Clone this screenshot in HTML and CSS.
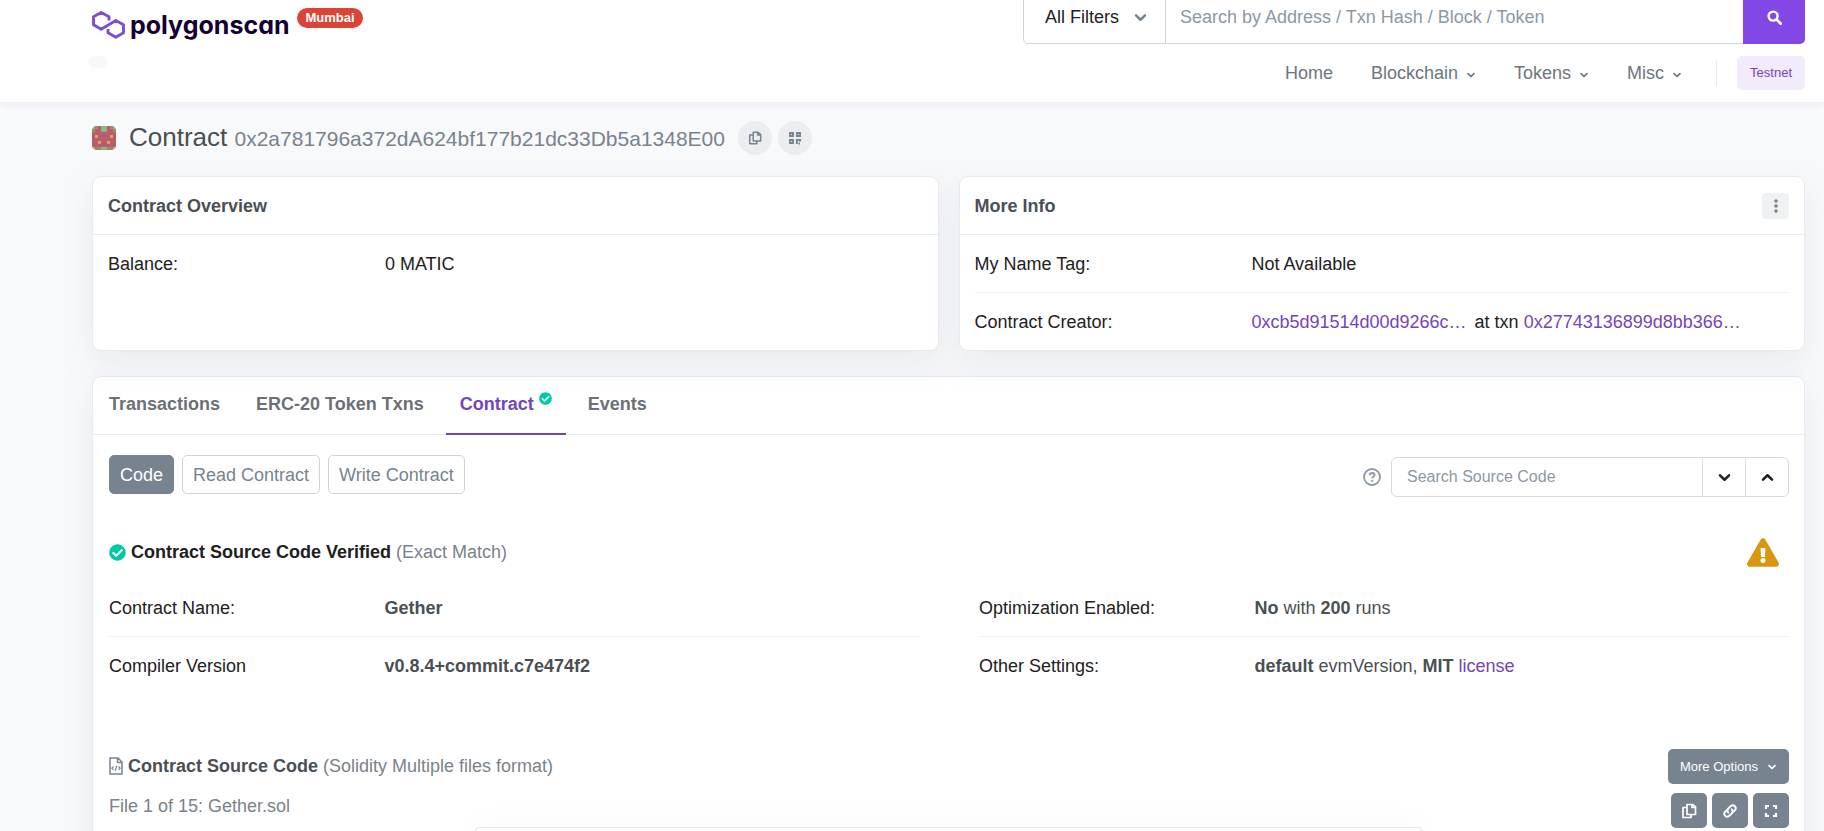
FILE: index.html
```html
<!DOCTYPE html>
<html lang="en">
<head>
<meta charset="utf-8">
<title>Contract | PolygonScan Mumbai</title>
<meta name="viewport" content="width=device-width, initial-scale=1">
<link rel="stylesheet" href="styles.css">
</head>
<body>
<svg class="sprite" aria-hidden="true">
  <symbol id="chevron" viewBox="0 0 10 10"><path d="M2 3.600 5 6.500l3-2.900" fill="none" stroke="currentColor" stroke-width="1.700" stroke-linecap="round" stroke-linejoin="round"/></symbol>
  <symbol id="copy" viewBox="0 0 16 16"><path d="M6 1.500h5.500L14.500 4v7.500H6zM11 1.800v2.700h3.200M6 4.500H2v10h8v-3" fill="none" stroke="currentColor" stroke-width="1.700" stroke-linejoin="round"/></symbol>
  <symbol id="check" viewBox="0 0 512 512"><path fill="currentColor" d="M504 256c0 137-111 248-248 248S8 393 8 256 119 8 256 8s248 111 248 248zM227.300 387.300l184-184c6.200-6.200 6.200-16.400 0-22.600l-22.600-22.600c-6.200-6.200-16.400-6.200-22.600 0L216 308.100l-70.100-70.100c-6.200-6.200-16.400-6.200-22.600 0l-22.600 22.600c-6.200 6.200-6.200 16.400 0 22.600l104 104c6.200 6.300 16.400 6.300 22.600.1z"/></symbol>
</svg>

<header class="site-header">
  <div class="brand">
    <a class="logo" href="#">
      <svg class="logo-mark" viewBox="0 0 33 28" fill="none" stroke="#7b4fd0" stroke-width="2.900" stroke-linejoin="round"><path d="M17 9.500V5.800L9.200 1.500 1.500 5.800v8l7.700 4.400L23.800 9.500l7.700 4.300v8L23.800 26.200 16 21.800V18"/></svg>
      <span class="logo-text">polygonscan</span>
    </a>
    <span class="network">Mumbai</span>
    <span class="price-pill"></span>
  </div>
  <div class="header-main">
    <form class="search">
      <div class="search-filter">
        <select aria-label="Search filter"><option>All Filters</option></select>
        <svg class="search-chevron" aria-hidden="true"><use href="#chevron"/></svg>
      </div>
      <input class="search-input" type="text" aria-label="Search" placeholder="Search by Address / Txn Hash / Block / Token">
      <button class="search-submit" type="button" aria-label="Search"><svg viewBox="0 0 16 16" fill="none" stroke="currentColor" stroke-linecap="round"><circle cx="6.500" cy="6.500" r="4.800" stroke-width="2.600"/><path d="m10.500 10.500 4 4" stroke-width="3"/></svg></button>
    </form>
    <nav class="nav">
      <a href="#">Home</a>
      <a href="#">Blockchain <svg aria-hidden="true"><use href="#chevron"/></svg></a>
      <a href="#">Tokens <svg aria-hidden="true"><use href="#chevron"/></svg></a>
      <a href="#">Misc <svg aria-hidden="true"><use href="#chevron"/></svg></a>
      <span class="nav-divider"></span>
      <button class="testnet" type="button">Testnet</button>
    </nav>
  </div>
</header>

<main class="page">
  <div class="title">
    <svg class="identicon" viewBox="0 0 8 8" shape-rendering="crispEdges" aria-hidden="true"><rect width="8" height="8" fill="#b95d6c"/><path fill="#86b981" d="M3 0h2v2H3zM0 0h1v1H0zM7 0h1v1H7zM3 7h2v1H3zM0 7h1v1H0zM7 7h1v1H7z"/><path fill="#9b8a63" d="M1 0h1v1H1zM6 0h1v1H6zM0 1h1v1H0zM7 1h1v1H7zM1 7h2v1H1zM5 7h2v1H5z"/><path fill="#d9a26a" d="M1 3h1v1H1zM6 3h1v1H6zM2 5h1v1H2zM5 5h1v1H5z"/></svg>
    <h1>Contract <span class="address">0x2a781796a372dA624bf177b21dc33Db5a1348E00</span></h1>
    <div class="title-actions">
      <button class="round" type="button" aria-label="Copy address"><svg aria-hidden="true"><use href="#copy"/></svg></button>
      <button class="round" type="button" aria-label="QR code"><svg viewBox="0 0 14 14" fill="none" stroke="currentColor" stroke-width="1.900"><path d="M2 2h3v3H2zM9 2h3v3H9zM2 9h3v3H2z"/><path d="M8.900 13V9h3.200v1.500M10.500 12.500H12"/></svg></button>
    </div>
  </div>

  <div class="summary">
    <section class="card">
      <div class="card-head"><h2>Contract Overview</h2></div>
      <dl class="rows"><div class="row"><dt>Balance:</dt><dd>0 MATIC</dd></div></dl>
    </section>
    <section class="card">
      <div class="card-head"><h2>More Info</h2><button class="kebab" type="button" aria-label="More"><svg viewBox="0 0 4 14" fill="currentColor"><circle cx="2" cy="2" r="1.800"/><circle cx="2" cy="7" r="1.800"/><circle cx="2" cy="12" r="1.800"/></svg></button></div>
      <dl class="rows">
        <div class="row"><dt>My Name Tag:</dt><dd>Not Available</dd></div>
        <div class="row"><dt>Contract Creator:</dt><dd class="creator"><a href="#">0xcb5d91514d00d9266c…</a><span>at txn <a href="#">0x27743136899d8bb366…</a></span></dd></div>
      </dl>
    </section>
  </div>

  <section class="card contract">
    <nav class="tabs">
      <a href="#">Transactions</a>
      <a href="#">ERC-20 Token Txns</a>
      <a class="active" href="#">Contract <svg aria-hidden="true"><use href="#check"/></svg></a>
      <a href="#">Events</a>
    </nav>
    <div class="contract-body">
      <div class="toolbar">
        <div class="modes">
          <button class="mode selected" type="button">Code</button>
          <button class="mode" type="button">Read Contract</button>
          <button class="mode" type="button">Write Contract</button>
        </div>
        <div class="source-search">
          <svg class="help" viewBox="0 0 18 18" fill="none" stroke="currentColor" stroke-width="1.800" aria-hidden="true"><circle cx="9" cy="9" r="8"/><path d="M6.600 7.200C6.800 5.600 8 5 9.100 5c1.400 0 2.400.800 2.400 2 0 1.700-2.400 1.700-2.400 3.300" stroke-width="2"/><circle cx="9.100" cy="12.800" r=".7" fill="currentColor" stroke-width="1"/></svg>
          <div class="source-group">
            <input type="text" aria-label="Search Source Code" placeholder="Search Source Code">
            <button type="button" aria-label="Next"><svg><use href="#chevron"/></svg></button>
            <button type="button" aria-label="Previous"><svg class="flip"><use href="#chevron"/></svg></button>
          </div>
        </div>
      </div>

      <div class="verified">
        <h3><svg class="ok" aria-hidden="true"><use href="#check"/></svg> Contract Source Code Verified <span class="muted">(Exact Match)</span></h3>
        <svg class="warning" viewBox="0 0 576 512" aria-hidden="true"><path fill="#d9960f" d="M569.500 440c18.500 32-4.700 72-41.600 72H48.100c-36.900 0-60-40.100-41.600-72L246.400 24c18.500-32 64.700-32 83.200 0l239.900 416zM288 354c-25.400 0-46 20.600-46 46s20.600 46 46 46 46-20.600 46-46-20.600-46-46-46zm-43.700-165.300 7.400 136c.3 6.400 5.600 11.300 12 11.300h48.500c6.400 0 11.600-5 12-11.300l7.400-136c.4-6.900-5.100-12.700-12-12.700h-63.400c-6.900 0-12.300 5.800-12 12.700z"/></svg>
      </div>

      <div class="details">
        <dl>
          <div class="row"><dt>Contract Name:</dt><dd><b>Gether</b></dd></div>
          <div class="row"><dt>Compiler Version</dt><dd><b>v0.8.4+commit.c7e474f2</b></dd></div>
        </dl>
        <dl>
          <div class="row"><dt>Optimization Enabled:</dt><dd><b>No</b> with <b>200</b> runs</dd></div>
          <div class="row"><dt>Other Settings:</dt><dd><b>default</b> evmVersion, <b>MIT</b> <a href="#">license</a></dd></div>
        </dl>
      </div>

      <div class="source">
        <div class="source-info">
          <h3><svg class="file" viewBox="0 0 14 18" fill="none" stroke="currentColor" stroke-width="1.500" stroke-linejoin="round" aria-hidden="true"><path d="M1 1h8l4 4v12H1zM8.500 1v4.500H13"/><path d="m4.500 9.500-1.700 1.700 1.700 1.700m5-3.400 1.700 1.700-1.700 1.700M7.800 8.800 6.200 13.600" stroke-width="1.200"/></svg> Contract Source Code <span class="muted">(Solidity Multiple files format)</span></h3>
          <p class="muted">File 1 of 15: Gether.sol</p>
        </div>
        <div class="source-actions">
          <button class="more" type="button">More Options <svg aria-hidden="true"><use href="#chevron"/></svg></button>
          <div class="icon-buttons">
            <button type="button" aria-label="Copy source"><svg><use href="#copy"/></svg></button>
            <button type="button" aria-label="Permalink"><svg viewBox="0 0 16 16" fill="none" stroke="currentColor" stroke-width="1.900" stroke-linecap="round"><path d="M6.300 9.700a3 3 0 0 1 0-4.200l2.600-2.600a3 3 0 0 1 4.200 4.200l-1.600 1.600"/><path d="M9.700 6.300a3 3 0 0 1 0 4.200l-2.600 2.600a3 3 0 0 1-4.200-4.200l1.600-1.600"/></svg></button>
            <button type="button" aria-label="Full screen"><svg viewBox="0 0 16 16" fill="none" stroke="currentColor" stroke-width="2.200"><path d="M3 6V3h3M10 3h3v3M13 10v3h-3M6 13H3v-3"/></svg></button>
          </div>
        </div>
      </div>
    </div>
  </section>
</main>
<aside class="notice" aria-label="Notice"></aside>
</body>
</html>
```

FILE: styles.css
```css
* { box-sizing: border-box; }
html { overflow: hidden; }
body {
  margin: 0;
  min-height: 100vh;
  background: #f8f9fb;
  color: #4a4f55;
  font: 18px/28px "Liberation Sans", Arial, sans-serif;
}
h1, h2, h3, p, dl, dd { margin: 0; }
a { color: #7345bd; text-decoration: none; }
button, input, select { font: inherit; margin: 0; }
button { display: inline-flex; align-items: center; justify-content: center; border: 0; padding: 0; }
.sprite { display: none; }
.muted { color: #7b828a; font-weight: 400; }

.site-header {
  display: flex;
  justify-content: space-between;
  height: 102px;
  padding: 0 19px 0 92px;
  background: #fff;
  box-shadow: 0 5px 6px rgba(140, 152, 180, 0.08);
}
.brand { display: grid; grid-template-columns: auto auto; align-content: start; column-gap: 8px; padding-top: 8px; }
.logo { display: flex; align-items: center; gap: 5px; height: 34px; color: #160033; }
.logo-mark { width: 33px; height: 28px; }
.logo-text { font: 700 25px/34px Inter, sans-serif; font-feature-settings: "cv11"; }
.network {
  align-self: start;
  padding: 0 8px;
  border-radius: 10px;
  background: #db4437;
  color: #fff;
  font-size: 13px;
  font-weight: 700;
  line-height: 20px;
}
.price-pill { width: 20px; height: 12px; margin: 14px 0 0 -4px; border-radius: 6px; background: #f8f8f8; }

.header-main { display: flex; flex-direction: column; align-items: flex-end; width: 782px; }
.search { display: flex; width: 100%; height: 54px; margin-top: -10px; }
.search-filter { display: flex; align-items: center; width: 143px; border: 1px solid #ced4da; border-radius: 0 0 0 5px; padding: 0 17px 0 21px; }
.search-filter select { flex: 1; min-width: 0; appearance: none; border: 0; padding: 0; background: none; color: #1e2022; }
.search-chevron { width: 15px; height: 15px; color: #77838f; }
.search-input { flex: 1; min-width: 0; border: solid #ced4da; border-width: 1px 0; padding: 0 14px; background: #fff; }
.search-input::placeholder, .source-group input::placeholder { color: #8c98a4; opacity: 1; }
.search-submit { width: 62px; border-radius: 0 0 5px 0; background: #8247e5; color: #fff; }
.search-submit svg { width: 15px; height: 15px; }
.nav { display: flex; align-items: center; padding-top: 12px; }
.nav a { display: flex; align-items: center; gap: 8px; margin-right: 38px; color: #6c757e; line-height: 34px; }
.nav svg { width: 10px; height: 10px; margin-top: 4px; }
.nav a:nth-of-type(4) { margin-right: 34px; }
.nav-divider { width: 1px; height: 26px; margin-right: 20px; background: #e7eaf3; }
.testnet { height: 34px; padding: 0 13px; border-radius: 5px; background: #f2ebfb; color: #7345bd; font-size: 13px; }

.page { padding: 19px 19px 0 92px; }
.title { display: flex; align-items: center; height: 34px; margin-bottom: 21px; }
.identicon { width: 24px; height: 24px; border-radius: 5px; }
.title h1 { margin: 0 13px; font-size: 26px; font-weight: 400; line-height: 34px; }
.address { color: #77838f; font-size: 21px; }
.title-actions { display: flex; gap: 6px; }
.round { width: 34px; height: 34px; border-radius: 50%; background: #ebedf0; color: #77838f; }
.round svg { width: 14px; height: 14px; }

.card { border: 1px solid #e7eaf0; border-radius: 9px; background: #fff; box-shadow: 0 10px 30px rgba(189, 197, 209, 0.25); }
.summary { display: grid; grid-template-columns: 1fr 1fr; gap: 20px; margin-bottom: 25px; }
.card-head { display: flex; align-items: center; justify-content: space-between; padding: 15px 15px 14px; border-bottom: 1px solid #e7eaf0; }
.card-head h2 { font-size: 18px; line-height: 28px; }
.kebab { width: 27px; height: 26px; border-radius: 4px; background: #eff1f3; color: #77838f; }
.kebab svg { width: 4px; height: 14px; }
.rows { padding: 0 15px; }
.row { display: grid; grid-template-columns: 34% 1fr; padding: 15px 0 14px; color: #1e2022; }
.row + .row { border-top: 1px solid #eceff3; }
.creator { display: flex; gap: 8px; }

.tabs { display: flex; gap: 8px; padding: 0 2px; border-bottom: 1px solid #e7eaf0; }
.tabs a { display: flex; gap: 5px; margin-bottom: -1px; padding: 13px 14px 15px; border-bottom: 2px solid transparent; color: #6c7075; font-weight: 700; }
.tabs a.active { border-color: #7345bd; color: #7345bd; }
.tabs svg { width: 13px; height: 13px; margin-top: 2px; color: #00c9a7; }
.contract-body { padding: 20px 15px 40px 16px; }
.toolbar { display: flex; align-items: flex-start; justify-content: space-between; }
.modes { display: flex; gap: 8px; }
.mode { height: 39px; padding: 0 10px; border: 1px solid #ced4da; border-radius: 5px; background: #fff; color: #77838f; }
.mode.selected { border-color: #77838f; background: #77838f; color: #fff; }
.source-search { display: flex; align-items: center; gap: 10px; padding-top: 2px; }
.help { width: 18px; height: 18px; color: #8c98a4; }
.source-group { display: flex; width: 398px; height: 40px; border: 1px solid #d5dae2; border-radius: 6px; }
.source-group input { flex: 1; min-width: 0; border: 0; padding: 0 15px; background: none; font-size: 16px; }
.source-group button { width: 43px; border-left: 1px solid #dfe3e9; background: none; color: #1e2022; }
.source-group svg { width: 15px; height: 15px; }
.flip { transform: rotate(180deg); }

.verified { display: flex; align-items: center; justify-content: space-between; margin-top: 39px; padding-right: 10px; }
.verified h3, .source h3 { display: flex; align-items: center; gap: 5px; font-size: 18px; line-height: 32px; }
.verified h3 { color: #1e2022; }
.ok { width: 17px; height: 17px; color: #00c9a7; }
.warning { width: 32px; height: 29px; }
.details { display: grid; grid-template-columns: 1fr 1fr; gap: 60px; margin-top: 11px; }
.details dd { color: #4a4f55; }

.source { display: flex; justify-content: space-between; margin-top: 55px; }
.source h3 { line-height: 34px; }
.source p { margin-top: 9px; }
.file { width: 14px; height: 18px; color: #77838f; }
.source-actions { display: flex; flex-direction: column; align-items: flex-end; gap: 9px; }
.source-actions button { height: 35px; border-radius: 5px; background: #77838f; color: #fff; }
.source-actions .more { gap: 9px; padding: 0 12px; font-size: 13px; }
.more svg { width: 10px; height: 10px; }
.icon-buttons { display: flex; gap: 5px; }
.icon-buttons button { width: 36px; }
.icon-buttons svg { width: 16px; height: 16px; }

.notice {
  position: fixed;
  bottom: 0;
  left: 475px;
  right: 402px;
  height: 4px;
  border: 1px solid #e7eaf0;
  border-bottom: 0;
  border-radius: 5px 5px 0 0;
  background: #fff;
  box-shadow: 0 0 24px rgba(140, 152, 164, 0.15);
}
```
